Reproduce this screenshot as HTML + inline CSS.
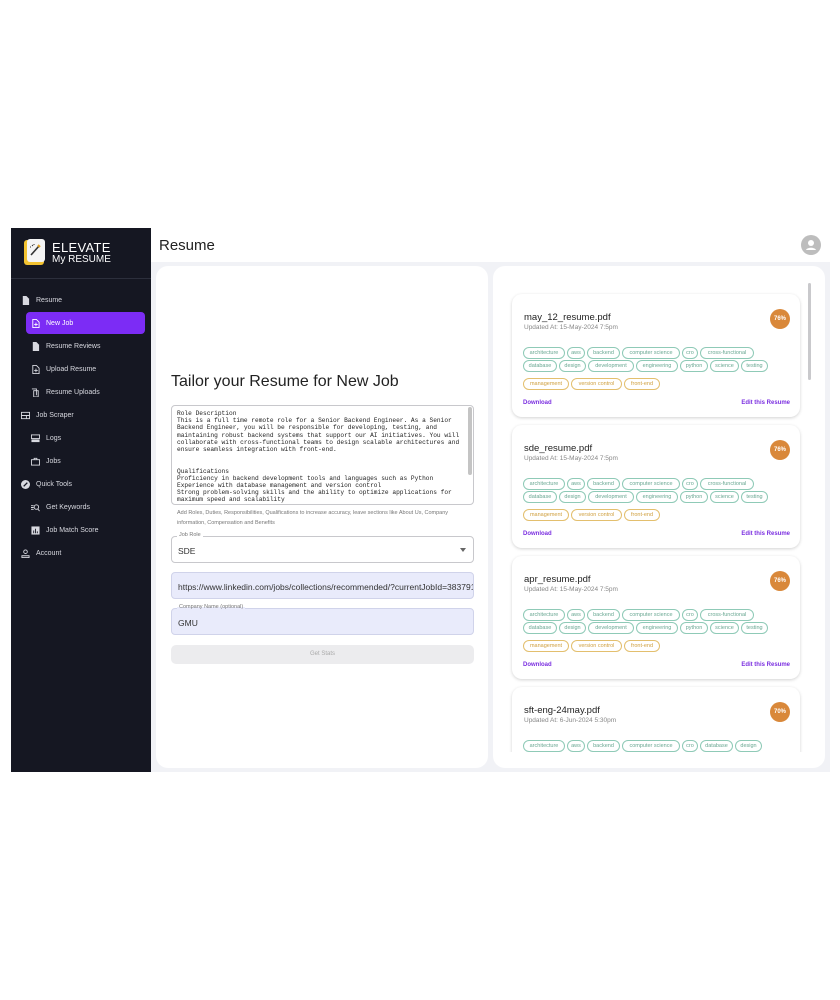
<!DOCTYPE html>
<html><head><meta charset="utf-8"><style>
*{box-sizing:border-box;margin:0;padding:0}
body{width:840px;height:1000px;background:#fff;font-family:"Liberation Sans",sans-serif;position:relative;overflow:hidden}
.abs{position:absolute}
#side{left:11px;top:228px;width:140px;height:544px;background:#151722}
.si{position:absolute;color:#d8d9e0;font-size:7px;display:flex;align-items:center;gap:6px}
.si svg{width:9px;height:9px}
#main{left:151px;top:262px;width:679px;height:510px;background:#f1f2f6}
.card{position:absolute;background:#fff;border-radius:12px}
.rc{position:absolute;left:512px;width:288px;height:123px;background:#fff;border-radius:10px;box-shadow:0 1px 3px rgba(0,0,0,.18)}
.rc h4{position:absolute;left:12px;top:18px;font-size:9.5px;font-weight:normal;color:#222}
.rc .up{position:absolute;left:12px;top:30px;font-size:6.5px;color:#888}
.rc .pc{position:absolute;left:258px;top:15px;width:20px;height:20px;border-radius:50%;background:#d9883a;color:#fff;font-size:6px;font-weight:bold;text-align:center;line-height:20px}
.row{position:absolute;left:11px;display:flex;gap:2px}
.t{height:12px;border:1px solid #8fcab7;border-radius:6px;font-size:5.5px;color:#6aa893;text-align:center;line-height:11px;white-space:nowrap;overflow:hidden}
.o{border-color:#e3bf6e;color:#cf9f3e}
.dl{position:absolute;top:106px;font-size:6px;color:#7b2fe0;font-weight:bold}
.fld{position:absolute;left:171px;width:303px;height:27px;border:1px solid #c8c8cc;border-radius:4px;font-size:8.5px;color:#333;padding:9px 0 0 6px}
.lab{position:absolute;top:-5px;left:5px;background:#fff;font-size:5.5px;color:#777;padding:0 2px}
.blue{background:#e9ebfb;border-color:#d0d3ea}
.blue .lab{background:linear-gradient(#fff 50%,#e9ebfb 50%)}
</style></head><body>
<div id="side" class="abs">
  <div class="abs" style="left:13px;top:12px;width:20px;height:25px;background:#f2c230;border-radius:3px"></div>
  <div class="abs" style="left:16px;top:11px;width:18px;height:23px;background:#f4f4f4;border-radius:3px"></div>
  <svg class="abs" style="left:17px;top:14px" width="14" height="16"><path d="M3 13 L11 4" stroke="#333" stroke-width="1.6"/><path d="M10 3l2 2" stroke="#e0a020" stroke-width="2"/><path d="M4 3l1 1M2 5l1 0M6 2v1" stroke="#333" stroke-width="1"/></svg>
  <div class="abs" style="left:41px;top:13px;color:#fff;font-size:13px;line-height:13px;letter-spacing:.3px">ELEVATE</div>
  <div class="abs" style="left:41px;top:26px;color:#fff;font-size:10px;line-height:11px">My RESUME</div>
  <div class="abs" style="left:0;top:50px;width:140px;height:1px;background:#2c2f3c"></div>
  <div class="abs" style="left:15px;top:84px;width:119px;height:22px;background:#7c2cf5;border-radius:4px"></div>
  <div class="si" style="left:10px;top:68px"><svg viewBox="0 0 10 10"><path d="M2 0h4l3 3v7H2z" fill="#d8d9e0"/></svg>Resume</div>
  <div class="si" style="left:20px;top:91px;color:#fff"><svg viewBox="0 0 10 10"><path d="M2 .5h4l3 3v6H2z" fill="none" stroke="#fff"/><path d="M5.5 4v4M3.5 6h4" stroke="#fff"/></svg>New Job</div>
  <div class="si" style="left:20px;top:114px"><svg viewBox="0 0 10 10"><path d="M2 0h4l3 3v7H2z" fill="#d8d9e0"/></svg>Resume Reviews</div>
  <div class="si" style="left:20px;top:137px"><svg viewBox="0 0 10 10"><path d="M2 .5h4l3 3v6H2z" fill="none" stroke="#d8d9e0"/><path d="M5.5 4v4M3.5 6h4" stroke="#d8d9e0"/></svg>Upload Resume</div>
  <div class="si" style="left:20px;top:160px"><svg viewBox="0 0 10 10"><path d="M1 1h5v7M3 3h5v7H3z" fill="none" stroke="#d8d9e0"/></svg>Resume Uploads</div>
  <div class="si" style="left:10px;top:183px"><svg viewBox="0 0 10 10"><rect x=".5" y="1.5" width="9" height="7" fill="none" stroke="#d8d9e0"/><path d="M.5 5h9M6 5v3.5" stroke="#d8d9e0"/></svg>Job Scraper</div>
  <div class="si" style="left:20px;top:206px"><svg viewBox="0 0 10 10"><rect x=".5" y="1" width="9" height="4" fill="none" stroke="#d8d9e0"/><rect x=".5" y="6" width="9" height="3" fill="#d8d9e0"/></svg>Logs</div>
  <div class="si" style="left:20px;top:229px"><svg viewBox="0 0 10 10"><rect x=".5" y="3" width="9" height="6" fill="none" stroke="#d8d9e0"/><path d="M3.5 3V1.5h3V3" fill="none" stroke="#d8d9e0"/></svg>Jobs</div>
  <div class="si" style="left:10px;top:252px"><svg viewBox="0 0 10 10"><circle cx="5" cy="5" r="5" fill="#d8d9e0"/><path d="M3 7l4-4" stroke="#151722" stroke-width="1.5"/></svg>Quick Tools</div>
  <div class="si" style="left:20px;top:275px"><svg viewBox="0 0 10 10"><path d="M0 3h3M0 5h3M0 7h3" stroke="#d8d9e0"/><circle cx="6" cy="4.5" r="2.5" fill="none" stroke="#d8d9e0"/><path d="M7.5 6.5L9.5 9" stroke="#d8d9e0"/></svg>Get Keywords</div>
  <div class="si" style="left:20px;top:298px"><svg viewBox="0 0 10 10"><rect x=".5" y=".5" width="9" height="9" fill="#d8d9e0"/><path d="M3 8V5M5 8V3M7 8V6" stroke="#151722"/></svg>Job Match Score</div>
  <div class="si" style="left:10px;top:321px"><svg viewBox="0 0 10 10"><circle cx="5" cy="3" r="2" fill="none" stroke="#d8d9e0"/><path d="M1 9.5v-2h8v2z" fill="none" stroke="#d8d9e0"/></svg>Account</div>
</div>
<div class="abs" style="left:159px;top:237px;font-size:15px;color:#222">Resume</div>
<div class="abs" style="left:801px;top:235px;width:20px;height:20px;border-radius:50%;background:#bdbdbd"></div>
<svg class="abs" style="left:801px;top:235px" width="20" height="20"><circle cx="10" cy="8" r="3" fill="#fff"/><path d="M5 15c1-3 9-3 10 0z" fill="#fff"/></svg>
<div id="main" class="abs"></div>
<div class="card" style="left:156px;top:266px;width:332px;height:502px"></div>
<div class="card" style="left:493px;top:266px;width:332px;height:502px"></div>
<div class="abs" style="left:808px;top:283px;width:3px;height:97px;background:#c9c9cc;border-radius:2px"></div>
<div class="abs" style="left:171px;top:373px;font-size:16px;color:#222">Tailor your Resume for New Job</div>
<div class="abs" style="left:171px;top:405px;width:303px;height:100px;border:1px solid #c8c8cc;border-radius:4px;overflow:hidden;padding:4px 8px 0 5px;font-family:'Liberation Mono',monospace;font-size:6.2px;line-height:7.2px;color:#222;white-space:pre">Role Description
This is a full time remote role for a Senior Backend Engineer. As a Senior
Backend Engineer, you will be responsible for developing, testing, and
maintaining robust backend systems that support our AI initiatives. You will
collaborate with cross-functional teams to design scalable architectures and
ensure seamless integration with front-end.


Qualifications
Proficiency in backend development tools and languages such as Python
Experience with database management and version control
Strong problem-solving skills and the ability to optimize applications for
maximum speed and scalability</div>
<div class="abs" style="left:468px;top:407px;width:4px;height:68px;background:#c4c4c4;border-radius:2px"></div>
<div class="abs" style="left:177px;top:508px;font-size:5.5px;line-height:10px;color:#777;width:300px">Add Roles, Duties, Responsibilities, Qualifications to increase accuracy, leave sections like About Us, Company information, Compensation and Benefits</div>
<div class="fld" style="top:536px"><span class="lab">Job Role</span>SDE<span style="position:absolute;right:7px;top:11px;border:3px solid transparent;border-top:4px solid #666"></span></div>
<div class="fld blue" style="top:572px;overflow:hidden;white-space:nowrap"><span class="lab">URL (optional)</span>https://www.linkedin.com/jobs/collections/recommended/?currentJobId=383791</div>
<div class="fld blue" style="top:608px"><span class="lab">Company Name (optional)</span>GMU</div>
<div class="abs" style="left:171px;top:645px;width:303px;height:19px;background:#ececee;border-radius:5px;font-size:6px;color:#aaa;text-align:center;line-height:19px">Get Stats</div>

<div class="abs" style="left:493px;top:270px;width:312px;height:482px;overflow:hidden">
<div style="position:absolute;left:-493px;top:-270px;width:840px;height:800px">
 <div class="rc" style="top:294px"><h4>may_12_resume.pdf</h4><div class="up">Updated At: 15-May-2024 7:5pm</div><div class="pc">76%</div>
  <div class="row" style="top:53px"><div class="t" style="width:42px">architecture</div><div class="t" style="width:18px">aws</div><div class="t" style="width:33px">backend</div><div class="t" style="width:58px">computer science</div><div class="t" style="width:16px">cro</div><div class="t" style="width:54px">cross-functional</div></div>
  <div class="row" style="top:66px"><div class="t" style="width:34px">database</div><div class="t" style="width:27px">design</div><div class="t" style="width:46px">development</div><div class="t" style="width:42px">engineering</div><div class="t" style="width:28px">python</div><div class="t" style="width:29px">science</div><div class="t" style="width:27px">testing</div></div>
  <div class="row" style="top:84px"><div class="t o" style="width:46px">management</div><div class="t o" style="width:51px">version control</div><div class="t o" style="width:36px">front-end</div></div>
  <div class="dl" style="left:11px">Download</div><div class="dl" style="right:10px">Edit this Resume</div></div>
 <div class="rc" style="top:425px"><h4>sde_resume.pdf</h4><div class="up">Updated At: 15-May-2024 7:5pm</div><div class="pc">76%</div>
  <div class="row" style="top:53px"><div class="t" style="width:42px">architecture</div><div class="t" style="width:18px">aws</div><div class="t" style="width:33px">backend</div><div class="t" style="width:58px">computer science</div><div class="t" style="width:16px">cro</div><div class="t" style="width:54px">cross-functional</div></div>
  <div class="row" style="top:66px"><div class="t" style="width:34px">database</div><div class="t" style="width:27px">design</div><div class="t" style="width:46px">development</div><div class="t" style="width:42px">engineering</div><div class="t" style="width:28px">python</div><div class="t" style="width:29px">science</div><div class="t" style="width:27px">testing</div></div>
  <div class="row" style="top:84px"><div class="t o" style="width:46px">management</div><div class="t o" style="width:51px">version control</div><div class="t o" style="width:36px">front-end</div></div>
  <div class="dl" style="left:11px">Download</div><div class="dl" style="right:10px">Edit this Resume</div></div>
 <div class="rc" style="top:556px"><h4>apr_resume.pdf</h4><div class="up">Updated At: 15-May-2024 7:5pm</div><div class="pc">76%</div>
  <div class="row" style="top:53px"><div class="t" style="width:42px">architecture</div><div class="t" style="width:18px">aws</div><div class="t" style="width:33px">backend</div><div class="t" style="width:58px">computer science</div><div class="t" style="width:16px">cro</div><div class="t" style="width:54px">cross-functional</div></div>
  <div class="row" style="top:66px"><div class="t" style="width:34px">database</div><div class="t" style="width:27px">design</div><div class="t" style="width:46px">development</div><div class="t" style="width:42px">engineering</div><div class="t" style="width:28px">python</div><div class="t" style="width:29px">science</div><div class="t" style="width:27px">testing</div></div>
  <div class="row" style="top:84px"><div class="t o" style="width:46px">management</div><div class="t o" style="width:51px">version control</div><div class="t o" style="width:36px">front-end</div></div>
  <div class="dl" style="left:11px">Download</div><div class="dl" style="right:10px">Edit this Resume</div></div>
 <div class="rc" style="top:687px"><h4>sft-eng-24may.pdf</h4><div class="up">Updated At: 6-Jun-2024 5:30pm</div><div class="pc">70%</div>
  <div class="row" style="top:53px"><div class="t" style="width:42px">architecture</div><div class="t" style="width:18px">aws</div><div class="t" style="width:33px">backend</div><div class="t" style="width:58px">computer science</div><div class="t" style="width:16px">cro</div><div class="t" style="width:33px">database</div><div class="t" style="width:27px">design</div></div></div>
</div></div>
</body></html>
